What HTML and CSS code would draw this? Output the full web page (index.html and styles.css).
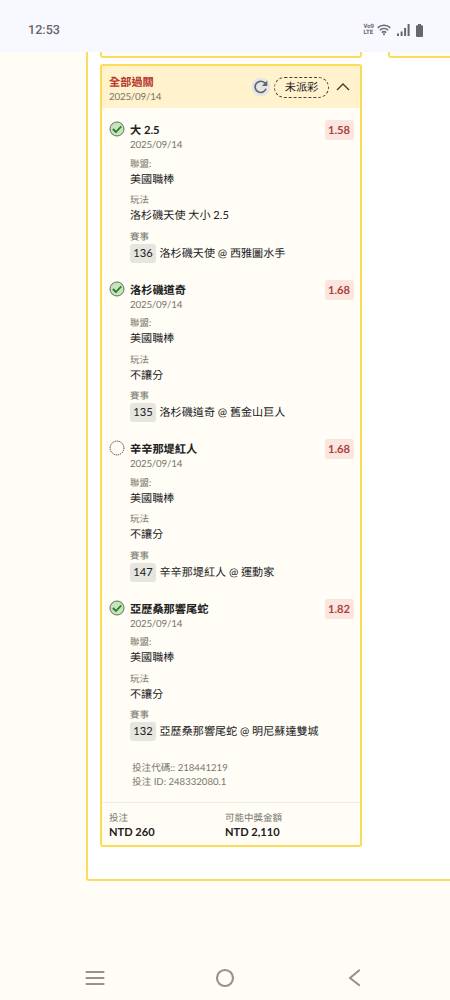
FILE: index.html
```html
<!DOCTYPE html>
<html lang="zh-Hant">
<head>
  <meta charset="utf-8">
  <title>投注紀錄</title>
  <link rel="stylesheet" href="styles.css">
</head>
<body>
  <div class="status-bar">
    <span class="time">12:53</span>
    <div class="status-icons">
      <span class="volte"><b>Vo9</b><b>LTE</b></span>
      <svg class="wifi" width="14" height="12" viewBox="0 0 14 12" fill="none" stroke="#66666b" stroke-width="1.5">
        <path d="M.7 3.9C4.3.5 9.7.5 13.3 3.9M2.8 6.3c2.4-2.3 6-2.3 8.4 0M4.9 8.6c1.2-1.1 3-1.1 4.2 0"/>
        <circle cx="7" cy="10.2" r="1" fill="#66666b" stroke="none"/>
      </svg>
      <svg class="signal" width="13" height="12" viewBox="0 0 13 12" fill="#66666b">
        <path d="M0 9.5h2V12H0zM3.6 7.5h2V12h-2zM7.1 4h2v8h-2zM10.6 0h2v12h-2z"/>
      </svg>
      <svg class="battery" width="7" height="13" viewBox="0 0 7 13" fill="#66666b">
        <path d="M2 0h3v1.3h1a1 1 0 0 1 1 1V12a1 1 0 0 1-1 1H1a1 1 0 0 1-1-1V2.3a1 1 0 0 1 1-1h1z"/>
      </svg>
    </div>
  </div>

  <div class="page">
    <div class="panel">
      <div class="previous-row">
        <div class="previous-card"></div>
        <div class="previous-card cut"></div>
      </div>

      <div class="ticket">
        <div class="ticket-header">
          <div>
            <div class="ticket-title">全部過關</div>
            <div class="date">2025/09/14</div>
          </div>
          <div class="ticket-actions">
            <svg class="refresh" width="20" height="20" viewBox="0 0 20 20">
              <circle cx="10" cy="10" r="9.5" fill="#e6e6e2"/>
              <path d="M15 11.8a5.6 5.6 0 1 1-1.3-5.9l1.3 1.4" fill="none" stroke="#606776" stroke-width="1.7"/>
              <path d="M16.3 3.6v5.4h-5.4z" fill="#606776"/>
            </svg>
            <span class="pending">未派彩</span>
            <svg class="chevron" width="14" height="8" viewBox="0 0 14 8" fill="none" stroke="#4a3a22" stroke-width="1.4">
              <path d="M1 7l6-6 6 6"/>
            </svg>
          </div>
        </div>

        <div class="bets">
          <div class="bet">
            <svg class="state" width="16" height="16" viewBox="0 0 16 16">
              <circle cx="8" cy="8" r="7" fill="#c5e6b9" stroke="#60705a" stroke-width="1"/>
              <path d="M3.9 8l3 3 5.4-5.6" fill="none" stroke="#2c7a32" stroke-width="1.8"/>
            </svg>
            <div class="bet-info">
              <div class="bet-title">大 2.5</div>
              <div class="date">2025/09/14</div>
              <div class="field"><div class="label">聯盟:</div><div class="value">美國職棒</div></div>
              <div class="field"><div class="label">玩法</div><div class="value">洛杉磯天使 大小 2.5</div></div>
              <div class="field"><div class="label">賽事</div><div class="value match"><span class="number">136</span>洛杉磯天使 @ 西雅圖水手</div></div>
            </div>
            <span class="odds">1.58</span>
          </div>

          <div class="bet">
            <svg class="state" width="16" height="16" viewBox="0 0 16 16">
              <circle cx="8" cy="8" r="7" fill="#c5e6b9" stroke="#60705a" stroke-width="1"/>
              <path d="M3.9 8l3 3 5.4-5.6" fill="none" stroke="#2c7a32" stroke-width="1.8"/>
            </svg>
            <div class="bet-info">
              <div class="bet-title">洛杉磯道奇</div>
              <div class="date">2025/09/14</div>
              <div class="field"><div class="label">聯盟:</div><div class="value">美國職棒</div></div>
              <div class="field"><div class="label">玩法</div><div class="value">不讓分</div></div>
              <div class="field"><div class="label">賽事</div><div class="value match"><span class="number">135</span>洛杉磯道奇 @ 舊金山巨人</div></div>
            </div>
            <span class="odds">1.68</span>
          </div>

          <div class="bet">
            <svg class="state" width="16" height="16" viewBox="0 0 16 16">
              <circle cx="8" cy="8" r="6.9" fill="none" stroke="#3d3d35" stroke-width="1" stroke-dasharray="1.3 .87"/>
            </svg>
            <div class="bet-info">
              <div class="bet-title">辛辛那堤紅人</div>
              <div class="date">2025/09/14</div>
              <div class="field"><div class="label">聯盟:</div><div class="value">美國職棒</div></div>
              <div class="field"><div class="label">玩法</div><div class="value">不讓分</div></div>
              <div class="field"><div class="label">賽事</div><div class="value match"><span class="number">147</span>辛辛那堤紅人 @ 運動家</div></div>
            </div>
            <span class="odds">1.68</span>
          </div>

          <div class="bet">
            <svg class="state" width="16" height="16" viewBox="0 0 16 16">
              <circle cx="8" cy="8" r="7" fill="#c5e6b9" stroke="#60705a" stroke-width="1"/>
              <path d="M3.9 8l3 3 5.4-5.6" fill="none" stroke="#2c7a32" stroke-width="1.8"/>
            </svg>
            <div class="bet-info">
              <div class="bet-title">亞歷桑那響尾蛇</div>
              <div class="date">2025/09/14</div>
              <div class="field"><div class="label">聯盟:</div><div class="value">美國職棒</div></div>
              <div class="field"><div class="label">玩法</div><div class="value">不讓分</div></div>
              <div class="field"><div class="label">賽事</div><div class="value match"><span class="number">132</span>亞歷桑那響尾蛇 @ 明尼蘇達雙城</div></div>
            </div>
            <span class="odds">1.82</span>
          </div>
        </div>

        <div class="bet-ids">
          <div>投注代碼:: 218441219</div>
          <div>投注 ID: 248332080.1</div>
        </div>

        <div class="ticket-footer">
          <div>
            <div class="label">投注</div>
            <div class="amount">NTD 260</div>
          </div>
          <div>
            <div class="label">可能中獎金額</div>
            <div class="amount">NTD 2,110</div>
          </div>
        </div>
      </div>
    </div>
  </div>

  <div class="nav-bar">
    <svg width="20" height="20" viewBox="0 0 20 20" fill="none" stroke="#96938c" stroke-width="2.2" stroke-linecap="round">
      <path d="M1.5 4h17M1.5 10h17M1.5 16h17"/>
    </svg>
    <svg width="20" height="20" viewBox="0 0 20 20" fill="none" stroke="#96938c" stroke-width="2.2">
      <circle cx="10" cy="10" r="8"/>
    </svg>
    <svg width="20" height="20" viewBox="0 0 20 20" fill="none" stroke="#96938c" stroke-width="2.2" stroke-linecap="round" stroke-linejoin="round">
      <path d="M14 2.5L5 10l9 7"/>
    </svg>
  </div>
</body>
</html>
```

FILE: styles.css
```css
* {
  box-sizing: border-box;
}

body {
  margin: 0;
  height: 1000px;
  display: flex;
  flex-direction: column;
  overflow: hidden;
  background-color: #fffdf5;
  color: #20201c;
  font-family: Lato, "Noto Sans CJK TC", sans-serif;
  text-rendering: geometricPrecision;
}

svg {
  display: block;
  flex-shrink: 0;
}

.status-bar {
  height: 52px;
  flex-shrink: 0;
  padding: 8px 27px 0 28px;
  display: flex;
  align-items: center;
  justify-content: space-between;
  background-color: #f8f8ff;
  color: #66666b;
}

.time {
  padding-top: 2px;
  font: 500 12.6px/16px Roboto, sans-serif;
}

.status-icons {
  display: flex;
  align-items: center;
}

.volte b {
  display: block;
  font: 700 6px/6px Roboto, sans-serif;
}

.wifi {
  margin-left: 3px;
}

.signal {
  margin-left: 6px;
}

.battery {
  margin-left: 6px;
}

.page {
  height: 829px;
  flex-shrink: 0;
  padding-left: 86px;
}

/* the panel runs off the right side of the screen */
.panel {
  height: 829px;
  padding-left: 12px;
  background-color: #fff;
  border: 2px solid #fadc60;
  border-width: 0 0 2px 2px;
  border-radius: 0 0 0 3px;
}

.previous-row {
  display: flex;
  gap: 26px;
}

.previous-card {
  width: 262px;
  height: 6px;
  flex-shrink: 0;
  background-color: #fffdf5;
  border: 2px solid #fadc60;
  border-top: 0;
  border-radius: 0 0 3px 3px;
}

.previous-card.cut {
  flex: 1;
  width: auto;
  border-right: 0;
  border-radius: 0 0 0 3px;
}

.ticket {
  width: 262px;
  height: 783px;
  margin-top: 6px;
  background-color: #fffdf5;
  border: 2px solid #fadc55;
  border-radius: 3px;
}

.ticket-header {
  height: 42px;
  padding: 8px 10px 0 7px;
  display: flex;
  justify-content: space-between;
  background-color: #fff2cc;
}

.ticket-title {
  padding-top: 1px;
  color: #b6352c;
  font-size: 11.2px;
  font-weight: 700;
  line-height: 16px;
}

.date {
  color: #77766d;
  font-size: 9.8px;
  letter-spacing: -0.22px;
  line-height: 12px;
}

.ticket-actions {
  height: 26px;
  display: flex;
  align-items: center;
}

.pending {
  width: 55px;
  height: 21px;
  margin-left: 3px;
  border: 1px dashed #4a4233;
  border-radius: 11px;
  font-size: 11.2px;
  line-height: 19px;
  text-align: center;
}

.chevron {
  margin-left: 7px;
}

.bets {
  padding: 15px 7px 0;
}

.bet {
  height: 159.67px;
  display: flex;
  align-items: flex-start;
}

.state {
  margin: -2px 5px 0 -0.5px;
}

.bet-info {
  flex: 1;
  padding-left: 0.5px;
}

.bet-title {
  font-size: 11.2px;
  font-weight: 700;
  line-height: 16px;
}

.field {
  margin-top: 6.5px;
}

.label {
  color: #77766d;
  font-size: 9.5px;
  line-height: 13px;
}

.value {
  font-size: 11.1px;
  line-height: 17px;
  white-space: nowrap;
}

.match {
  display: flex;
  align-items: center;
  height: 19px;
}

.number {
  width: 26px;
  height: 19px;
  margin-right: 3.5px;
  background-color: #e7e5df;
  border-radius: 3px;
  line-height: 19px;
  text-align: center;
}

.odds {
  width: 29px;
  height: 20px;
  margin: -3px -0.5px 0 0;
  background-color: #fbe6df;
  border-radius: 3px;
  color: #ae423b;
  font-size: 11.2px;
  font-weight: 700;
  line-height: 21px;
  text-align: center;
}

.bet-ids {
  height: 40px;
  padding-left: 30px;
  color: #77766d;
  font-size: 9.6px;
  line-height: 14px;
}

.ticket-footer {
  padding: 9px 7px 0;
  display: grid;
  grid-template-columns: 116px 1fr;
  border-top: 1px solid #eeece5;
}

.amount {
  font-size: 11.1px;
  font-weight: 700;
  line-height: 16px;
}

.nav-bar {
  margin-top: auto;
  height: 45px;
  padding: 0 85px;
  display: flex;
  align-items: center;
  justify-content: space-between;
}
```
